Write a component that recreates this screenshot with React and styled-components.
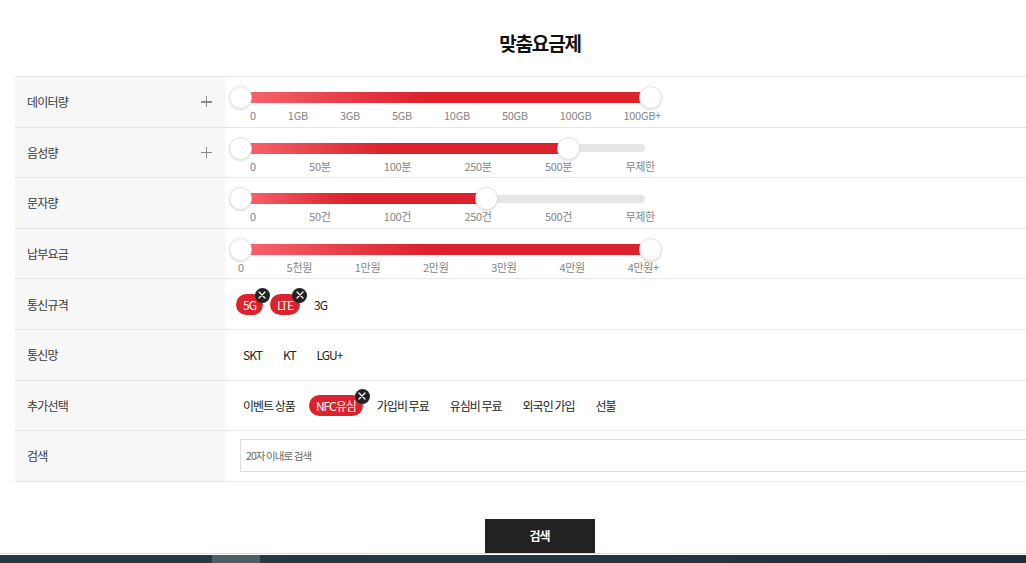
import React from 'react'
import { styled, createGlobalStyle } from 'styled-components'

const GlobalStyle = createGlobalStyle`
  html, body {
    margin: 0;
    padding: 0;
    background: #fff;
    overflow: hidden;
  }
  body {
    font-family: "Noto Sans CJK KR", "Noto Sans", sans-serif;
    color: #222;
  }
`;

const Page = styled.div`
  width: 1026px;
  height: 563px;
  overflow: hidden;
  display: flex;
  flex-direction: column;
`;

const Wrap = styled.div`
  width: 1050px;
  margin-left: 15px;
`;

const Title = styled.h2`
  margin: 0;
  padding: 30px 0 20px;
  line-height: 26px;
  font-size: 19px;
  letter-spacing: -1.2px;
  font-weight: 700;
  color: #111;
  text-align: center;
`;

const Table = styled.div`
  border-top: 1px solid #e6e6e6;
`;

const Row = styled.div`
  display: flex;
  height: 50.6px;
  box-sizing: border-box;
  border-bottom: 1px solid #e6e6e6;
`;

const Label = styled.div`
  width: 210px;
  flex: none;
  box-sizing: border-box;
  background: #f7f7f7;
  padding: 0 12px;
  display: flex;
  align-items: center;
  justify-content: space-between;
  font-size: 12px;
  letter-spacing: -0.8px;
  color: #3a3a3a;
`;

const Plus = styled.span`
  position: relative;
  width: 11px;
  height: 11px;
  margin-right: 1px;
  &::before, &::after {
    content: '';
    position: absolute;
    background: #8a8a8a;
  }
  &::before { left: 0; right: 0; top: 5px; height: 1.4px; }
  &::after { top: 0; bottom: 0; left: 5px; width: 1.4px; }
`;

const Cell = styled.div`
  flex: 1;
  display: flex;
  align-items: center;
  padding-left: ${p => p.$pad}px;
`;

const SliderBox = styled.div`
  width: 432px;
  padding-top: 9px;
  align-self: flex-start;
`;

const TrackArea = styled.div`
  position: relative;
  height: 23px;
`;

const Rail = styled.div`
  position: absolute;
  left: 11px;
  width: 405px;
  top: 7.5px;
  height: 8px;
  border-radius: 4px;
  background: #e6e6e6;
`;

const Fill = styled.div`
  position: absolute;
  left: 11px;
  top: 6px;
  height: 11px;
  background: linear-gradient(90deg, #f8666f 0%, #e2343e 32%, #dc222d 45%, #dc222d 100%);
`;

const Knob = styled.span`
  position: absolute;
  top: 0;
  width: 23px;
  height: 23px;
  margin-left: -11.5px;
  box-sizing: border-box;
  border-radius: 50%;
  background: #fff;
  border: 1px solid #e2e2e2;
  box-shadow: 0 1px 2px rgba(0, 0, 0, 0.12);
`;

const Ticks = styled.div`
  display: flex;
  justify-content: space-between;
  margin-top: -1px;
  padding: 0 ${p => p.$right}px 0 ${p => p.$left}px;
  font-size: 11px;
  line-height: 14px;
  color: #858585;
  letter-spacing: -0.3px;
`;

const ChipList = styled.div`
  display: flex;
  align-items: center;
  gap: 7px;
`;

const Chip = styled.span`
  position: relative;
  display: inline-flex;
  align-items: center;
  height: 21px;
  padding: 0 7px;
  border-radius: 11px;
  font-size: 12px;
  letter-spacing: -1px;
  background: ${p => (p.$on ? '#dc222d' : 'transparent')};
  color: ${p => (p.$on ? '#fff' : '#222')};
`;

const Remove = styled.span`
  position: absolute;
  top: -6px;
  right: -7px;
  width: 15px;
  height: 15px;
  border-radius: 50%;
  background: #222;
  display: flex;
  align-items: center;
  justify-content: center;
`;

const SearchInput = styled.input`
  flex: 1;
  height: 33px;
  box-sizing: border-box;
  border: 1px solid #ddd;
  padding: 0 5px;
  font-family: "Noto Sans CJK KR", "Noto Sans", sans-serif;
  font-size: 10.5px;
  letter-spacing: -0.9px;
  outline: none;
  &::placeholder { color: #666; }
`;

const ButtonArea = styled.div`
  display: flex;
  justify-content: center;
  padding-top: 37px;
  margin-left: -1px;
`;

const SearchButton = styled.button`
  width: 110px;
  height: 34px;
  border: 0;
  background: #222;
  color: #fff;
  font-family: "Noto Sans CJK KR", "Noto Sans", sans-serif;
  font-size: 12px;
  font-weight: 700;
  letter-spacing: -1px;
`;

const Divider = styled.div`
  height: 2px;
  background: #dcdcdc;
  margin-top: 0;
`;

const Footer = styled.div`
  margin-top: 1px;
  height: 10px;
  background: linear-gradient(90deg, #243b45 0%, #233842 50%, #1f2c3c 100%);
  display: flex;
`;

const FooterTab = styled.span`
  margin-left: 212px;
  width: 48px;
  background: #4d5d66;
`;

const XIcon = () => (
  <svg width="8" height="8" viewBox="0 0 8 8">
    <path d="M1 1L7 7M7 1L1 7" stroke="#fff" strokeWidth="1.3" strokeLinecap="round" />
  </svg>
);

const sliders = [
  { label: '데이터량', plus: true, ticks: ['0', '1GB', '3GB', '5GB', '10GB', '50GB', '100GB', '100GB+'], from: 0, to: 1, left: 21, right: 0 },
  { label: '음성량', plus: true, ticks: ['0', '50분', '100분', '250분', '500분', '무제한'], from: 0, to: 0.8, left: 21, right: 6, rail: true },
  { label: '문자량', ticks: ['0', '50건', '100건', '250건', '500건', '무제한'], from: 0, to: 0.6, left: 21, right: 6, rail: true },
  { label: '납부요금', ticks: ['0', '5천원', '1만원', '2만원', '3만원', '4만원', '4만원+'], from: 0, to: 1, left: 9, right: 2 },
];

const TRAVEL = 410;

const Slider = ({ s }) => (
  <SliderBox>
    <TrackArea>
      {s.rail && <Rail />}
      <Fill style={{ left: 11 + s.from * TRAVEL, width: (s.to - s.from) * TRAVEL }} />
      <Knob style={{ left: 11 + s.from * TRAVEL }} />
      <Knob style={{ left: 11 + s.to * TRAVEL }} />
    </TrackArea>
    <Ticks $left={s.left} $right={s.right}>
      {s.ticks.map(t => <span key={t}>{t}</span>)}
    </Ticks>
  </SliderBox>
);

const chipRows = [
  { label: '통신규격', items: [['5G', true], ['LTE', true], ['3G', false]] },
  { label: '통신망', items: [['SKT', false], ['KT', false], ['LGU+', false]] },
  { label: '추가선택', items: [['이벤트 상품', false], ['NFC유심', true], ['가입비 무료', false], ['유심비 무료', false], ['외국인 가입', false], ['선불', false]] },
];

const App = () => {
  return (
    <Page>
      <GlobalStyle />
      <Wrap>
        <Title>맞춤요금제</Title>
        <Table>
          {sliders.map(s => (
            <Row key={s.label}>
              <Label>
                {s.label}
                {s.plus && <Plus />}
              </Label>
              <Cell $pad={4}>
                <Slider s={s} />
              </Cell>
            </Row>
          ))}
          {chipRows.map(r => (
            <Row key={r.label}>
              <Label>{r.label}</Label>
              <Cell $pad={11}>
                <ChipList>
                  {r.items.map(([name, on]) => (
                    <Chip key={name} $on={on}>
                      {name}
                      {on && <Remove><XIcon /></Remove>}
                    </Chip>
                  ))}
                </ChipList>
              </Cell>
            </Row>
          ))}
          <Row>
            <Label>검색</Label>
            <Cell $pad={15}>
              <SearchInput placeholder="20자 이내로 검색" />
            </Cell>
          </Row>
        </Table>
        <ButtonArea>
          <SearchButton>검색</SearchButton>
        </ButtonArea>
      </Wrap>
      <Divider />
      <Footer>
        <FooterTab />
      </Footer>
    </Page>
  )
}

export default App
